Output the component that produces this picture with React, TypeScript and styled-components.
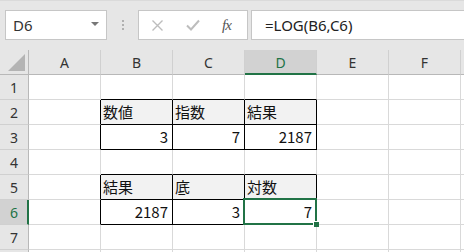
import React from "react";
import styled, { createGlobalStyle } from "styled-components";

const GlobalStyle = createGlobalStyle`
  html, body {
    margin: 0;
    padding: 0;
    background: #ffffff;
  }
  body {
    font-family: "Noto Sans CJK JP", "Noto Sans", sans-serif;
  }
`;

const GREEN = "#217346";
const GRID = "#d9d9d9";
const HEAD_SEP = "#d0d0d0";
const HEAD_EDGE = "#b8b8b8";

const Window = styled.div`
  width: 464px;
  height: 252px;
  overflow: hidden;
  background: #e6e6e6;
  display: flex;
  flex-direction: column;
`;

const FormulaBar = styled.div`
  height: 50px;
  flex: none;
  display: flex;
  align-items: flex-start;
  padding: 9px 0 0 5px;
  box-sizing: border-box;
  border-top: 1px solid #dadada;
`;

const NameBox = styled.div`
  width: 102px;
  height: 30px;
  box-sizing: border-box;
  background: #fff;
  border: 1px solid #c6c6c6;
  display: flex;
  align-items: center;
  justify-content: space-between;
  padding: 0 7px 0 7px;
  font-size: 15px;
  color: #333;
  font-family: "Noto Sans", sans-serif;
`;

const DropArrow = styled.span`
  width: 0;
  height: 0;
  border-left: 4px solid transparent;
  border-right: 4px solid transparent;
  border-top: 4px solid #777;
  margin-bottom: 2px;
`;

const Grip = styled.div`
  width: 31px;
  height: 30px;
  display: flex;
  flex-direction: column;
  align-items: center;
  justify-content: center;
  gap: 2px;
`;

const GripDot = styled.span`
  width: 2px;
  height: 2px;
  background: #b0b0b0;
`;

const FxBox = styled.div`
  width: 110px;
  height: 30px;
  box-sizing: border-box;
  background: #fff;
  border: 1px solid #c6c6c6;
  display: flex;
  align-items: center;
  padding-left: 12px;
  gap: 22px;
`;

const FxLabel = styled.span`
  font-family: "Liberation Serif", serif;
  font-style: italic;
  font-size: 15px;
  color: #555;
  letter-spacing: -1px;
`;

const FormulaInput = styled.div`
  flex: 1;
  height: 30px;
  box-sizing: border-box;
  margin-left: 3px;
  margin-right: -10px;
  background: #fff;
  border: 1px solid #c6c6c6;
  display: flex;
  align-items: center;
  padding-left: 13px;
  font-size: 15px;
  color: #222;
  font-family: "Noto Sans", sans-serif;
`;

const SheetClip = styled.div`
  flex: 1;
  overflow: hidden;
  background: #fff;
`;

const Sheet = styled.div`
  display: grid;
  grid-template-columns: 29px repeat(7, 72px);
  grid-auto-rows: 25px;
  width: max-content;
`;

const Corner = styled.div`
  background: #e6e6e6;
  border-right: 1px solid ${HEAD_EDGE};
  border-bottom: 1px solid ${HEAD_EDGE};
  box-sizing: border-box;
  display: flex;
  align-items: flex-end;
  justify-content: flex-end;
  padding: 0 3px 3px 0;
`;

const CornerTriangle = styled.span`
  width: 0;
  height: 0;
  border-left: 17px solid transparent;
  border-bottom: 17px solid #b4b4b4;
`;

const ColHead = styled.div<{ $active?: boolean }>`
  background: ${({ $active }) => ($active ? "#d2d2d2" : "#e6e6e6")};
  box-sizing: border-box;
  border-right: 1px solid ${HEAD_SEP};
  border-bottom: ${({ $active }) =>
    $active ? `2px solid ${GREEN}` : `1px solid ${HEAD_EDGE}`};
  display: flex;
  align-items: center;
  justify-content: center;
  font-family: "Noto Sans", sans-serif;
  font-size: 14px;
  color: ${({ $active }) => ($active ? GREEN : "#333")};
  padding-top: ${({ $active }) => ($active ? "1px" : "0")};
`;

const RowHead = styled.div<{ $active?: boolean }>`
  background: ${({ $active }) => ($active ? "#d2d2d2" : "#e6e6e6")};
  box-sizing: border-box;
  border-right: ${({ $active }) =>
    $active ? `2px solid ${GREEN}` : `1px solid ${HEAD_EDGE}`};
  border-bottom: 1px solid ${HEAD_SEP};
  display: flex;
  align-items: center;
  justify-content: center;
  font-family: "Noto Sans", sans-serif;
  font-size: 14px;
  color: ${({ $active }) => ($active ? GREEN : "#333")};
  padding-left: ${({ $active }) => ($active ? "1px" : "0")};
`;

const Cell = styled.div<{
  $right: string;
  $bottom: string;
  $fill?: string;
  $num?: boolean;
}>`
  position: relative;
  box-sizing: border-box;
  background: ${({ $fill }) => $fill || "#fff"};
  border-right: 1px solid ${({ $right }) => $right};
  border-bottom: 1px solid ${({ $bottom }) => $bottom};
  display: flex;
  align-items: flex-end;
  justify-content: ${({ $num }) => ($num ? "flex-end" : "flex-start")};
  padding: 0 4px 1px 2px;
  font-size: 15px;
  line-height: 22px;
  color: #111;
  white-space: nowrap;
`;

const Selection = styled.div`
  position: absolute;
  z-index: 2;
  left: -2px;
  top: -2px;
  right: -1px;
  bottom: -1px;
  border: 2px solid ${GREEN};
  pointer-events: none;
`;

const FillHandle = styled.span`
  position: absolute;
  right: -4px;
  bottom: -4px;
  width: 5px;
  height: 5px;
  background: ${GREEN};
  border-left: 1px solid #fff;
  border-top: 1px solid #fff;
`;

const COLS = ["A", "B", "C", "D", "E", "F", "G"];
const ROWS = [1, 2, 3, 4, 5, 6, 7, 8];

// the last column and row only peek in at the edge, their labels are off screen
const colLabel = (c: string) => (c === "G" ? "" : c);
const rowLabel = (r: number) => (r === 8 ? "" : String(r));

const data: Record<string, string> = {
  B2: "数値",
  C2: "指数",
  D2: "結果",
  B3: "3",
  C3: "7",
  D3: "2187",
  B5: "結果",
  C5: "底",
  D5: "対数",
  B6: "2187",
  C6: "3",
  D6: "7",
};

const headerRows = [2, 5];
const tableRows = [2, 3, 5, 6];

const inTable = (r: number, c: number) =>
  tableRows.includes(r) && c >= 1 && c <= 3;

const Cross = () => (
  <svg width="13" height="13" viewBox="0 0 13 13">
    <path d="M1.5 1.5 L11.5 11.5 M11.5 1.5 L1.5 11.5" stroke="#bdbdbd" strokeWidth="1.4" fill="none" />
  </svg>
);

const Check = () => (
  <svg width="14" height="12" viewBox="0 0 14 12">
    <path d="M1 6.5 L5 10.5 L13 1.5" stroke="#bdbdbd" strokeWidth="2" fill="none" />
  </svg>
);

export default function App() {
  const active = { col: 3, row: 6 };

  return (
    <Window>
      <GlobalStyle />
      <FormulaBar>
        <NameBox>
          D6
          <DropArrow />
        </NameBox>
        <Grip>
          <GripDot />
          <GripDot />
          <GripDot />
        </Grip>
        <FxBox>
          <Cross />
          <Check />
          <FxLabel>fx</FxLabel>
        </FxBox>
        <FormulaInput>=LOG(B6,C6)</FormulaInput>
      </FormulaBar>
      <SheetClip>
        <Sheet>
          <Corner>
            <CornerTriangle />
          </Corner>
          {COLS.map((c, i) => (
            <ColHead key={c} $active={i === active.col}>
              {colLabel(c)}
            </ColHead>
          ))}
          {ROWS.map((r) => (
            <React.Fragment key={r}>
              <RowHead $active={r === active.row}>{rowLabel(r)}</RowHead>
              {COLS.map((c, ci) => {
                const key = `${c}${r}`;
                const value = data[key];
                const right =
                  inTable(r, ci) || inTable(r, ci + 1) ? "#000" : GRID;
                const bottom =
                  inTable(r, ci) || inTable(r + 1, ci) ? "#000" : GRID;
                const isHead = headerRows.includes(r) && inTable(r, ci);
                const isNum = value !== undefined && /^\d+$/.test(value);
                const selected = r === active.row && ci === active.col;
                return (
                  <Cell
                    key={key}
                    $right={right}
                    $bottom={bottom}
                    $fill={isHead ? "#f2f2f2" : undefined}
                    $num={isNum}
                  >
                    {value}
                    {selected && (
                      <Selection>
                        <FillHandle />
                      </Selection>
                    )}
                  </Cell>
                );
              })}
            </React.Fragment>
          ))}
        </Sheet>
      </SheetClip>
    </Window>
  );
}
